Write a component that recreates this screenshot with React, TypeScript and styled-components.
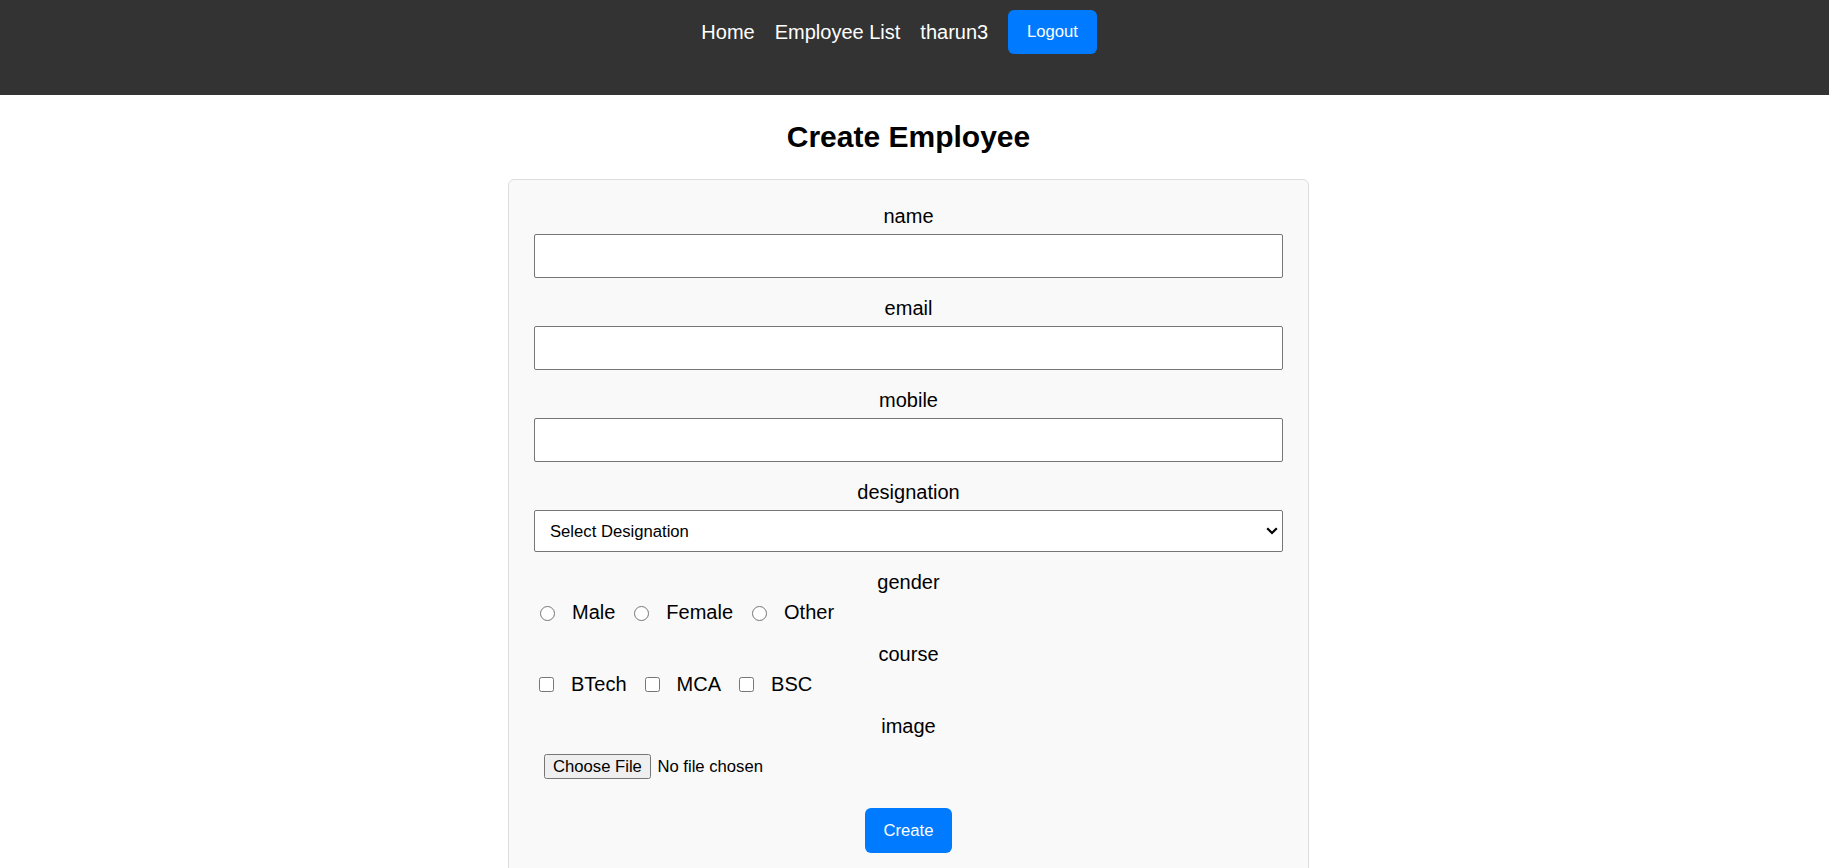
import React from "react";
import styled, { createGlobalStyle } from "styled-components";

const GlobalStyle = createGlobalStyle`
  * { box-sizing: border-box; }
  html, body { margin: 0; padding: 0; background: #fff; overflow: hidden; }
  body { font-family: "Liberation Sans", Arial, sans-serif; color: #000; }
`;

const Header = styled.header`
  height: 95px;
  margin-right: 3px;
  background: #333;
  padding: 10px 31px 0 0;
`;

const NavBar = styled.nav`
  display: flex;
  justify-content: center;
  align-items: center;
  gap: 20px;
  height: 44px;
`;

const NavLink = styled.a`
  color: #fff;
  font-size: 20px;
  line-height: 23px;
  text-decoration: none;
`;

const PrimaryButton = styled.button`
  display: block;
  height: 44px;
  padding: 0 18.75px;
  border: none;
  border-radius: 6px;
  background: #007bff;
  color: #fff;
  font-family: "Liberation Sans", Arial, sans-serif;
  font-size: 16.67px;
  line-height: 20px;
  cursor: pointer;
`;

const CreateButton = styled(PrimaryButton)`
  height: 45px;
  margin: 1px auto 0;
`;

const Main = styled.main`
  padding-right: 15px;
`;

const Title = styled.h2`
  margin: 24.5px 0 25px;
  font-size: 30px;
  line-height: 34.5px;
  font-weight: bold;
  text-align: center;
`;

const Card = styled.form`
  width: 801px;
  margin: 0 auto;
  padding: 25px;
  background: #f9f9f9;
  border: 1px solid #ddd;
  border-radius: 6px;
`;

const Field = styled.div`
  display: flex;
  flex-direction: column;
  margin-bottom: 19px;
`;

const FieldLabel = styled.label`
  display: block;
  margin-bottom: 6px;
  font-size: 20px;
  line-height: 23px;
  text-align: center;
`;

const TextInput = styled.input`
  width: 100%;
  height: 44px;
  padding: 0 10px;
  border: 1px solid #767676;
  border-radius: 2px;
  background: #fff;
  font-family: "Liberation Sans", Arial, sans-serif;
  font-size: 16.67px;
`;

const SelectWrap = styled.div`
  position: relative;
`;

const Select = styled.select`
  appearance: none;
  -webkit-appearance: none;
  display: block;
  width: 100%;
  height: 42px;
  padding: 0 30px 0 15px;
  border: 1px solid #767676;
  border-radius: 2px;
  background: #fff;
  color: #000;
  font-family: "Liberation Sans", Arial, sans-serif;
  font-size: 16.67px;
`;

const Chevron = styled.svg`
  position: absolute;
  right: 5px;
  top: 50%;
  transform: translateY(-50%);
  pointer-events: none;
`;

const OptionRow = styled.div`
  display: flex;
  align-items: center;
  gap: 18px;
  height: 24px;
  padding-left: 5px;
`;

const OptionItem = styled.label`
  display: flex;
  align-items: center;
  gap: 17px;
  font-size: 20px;
  line-height: 24px;
`;

const Radio = styled.input`
  appearance: none;
  -webkit-appearance: none;
  width: 15px;
  height: 15px;
  margin: 3px 0 0 1px;
  border: 1px solid #767676;
  border-radius: 50%;
  background: #fff;
`;

const Checkbox = styled.input`
  appearance: none;
  -webkit-appearance: none;
  width: 15px;
  height: 15px;
  margin: 0;
  border: 1px solid #767676;
  border-radius: 2.5px;
  background: #fff;
`;

const FileRow = styled.label`
  display: flex;
  align-items: center;
  padding: 10px;
  font-size: 16.67px;
`;

const HiddenFile = styled.input`
  display: none;
`;

const FileButton = styled.span`
  display: inline-block;
  height: 25px;
  padding: 0 8px;
  border: 1px solid #767676;
  border-radius: 2.5px;
  background: #efefef;
  line-height: 23px;
`;

const FileText = styled.span`
  margin-left: 6.5px;
`;

export default function App() {
  return (
    <>
      <GlobalStyle />
      <Header>
        <NavBar>
          <NavLink href="#">Home</NavLink>
          <NavLink href="#">Employee List</NavLink>
          <NavLink as="span">tharun3</NavLink>
          <PrimaryButton type="button">Logout</PrimaryButton>
        </NavBar>
      </Header>
      <Main>
        <Title>Create Employee</Title>
        <Card onSubmit={(e) => e.preventDefault()}>
          <Field>
            <FieldLabel htmlFor="name">name</FieldLabel>
            <TextInput id="name" type="text" />
          </Field>
          <Field>
            <FieldLabel htmlFor="email">email</FieldLabel>
            <TextInput id="email" type="email" />
          </Field>
          <Field>
            <FieldLabel htmlFor="mobile">mobile</FieldLabel>
            <TextInput id="mobile" type="text" />
          </Field>
          <Field>
            <FieldLabel htmlFor="designation">designation</FieldLabel>
            <SelectWrap>
              <Select id="designation" defaultValue="">
                <option value="">Select Designation</option>
                <option value="HR">HR</option>
                <option value="Manager">Manager</option>
                <option value="Sales">Sales</option>
              </Select>
              <Chevron width="12" height="8" viewBox="0 0 12 8">
                <path d="M1.2 1.2 L6 6 L10.8 1.2" fill="none" stroke="#000" strokeWidth="2.2" />
              </Chevron>
            </SelectWrap>
          </Field>
          <Field>
            <FieldLabel as="div">gender</FieldLabel>
            <OptionRow>
              {["Male", "Female", "Other"].map((g) => (
                <OptionItem key={g}>
                  <Radio type="radio" name="gender" value={g} />
                  {g}
                </OptionItem>
              ))}
            </OptionRow>
          </Field>
          <Field>
            <FieldLabel as="div">course</FieldLabel>
            <OptionRow>
              {["BTech", "MCA", "BSC"].map((c) => (
                <OptionItem key={c}>
                  <Checkbox type="checkbox" value={c} />
                  {c}
                </OptionItem>
              ))}
            </OptionRow>
          </Field>
          <Field>
            <FieldLabel as="div">image</FieldLabel>
            <FileRow>
              <HiddenFile type="file" />
              <FileButton>Choose File</FileButton>
              <FileText>No file chosen</FileText>
            </FileRow>
          </Field>
          <CreateButton type="submit">Create</CreateButton>
        </Card>
      </Main>
    </>
  );
}
